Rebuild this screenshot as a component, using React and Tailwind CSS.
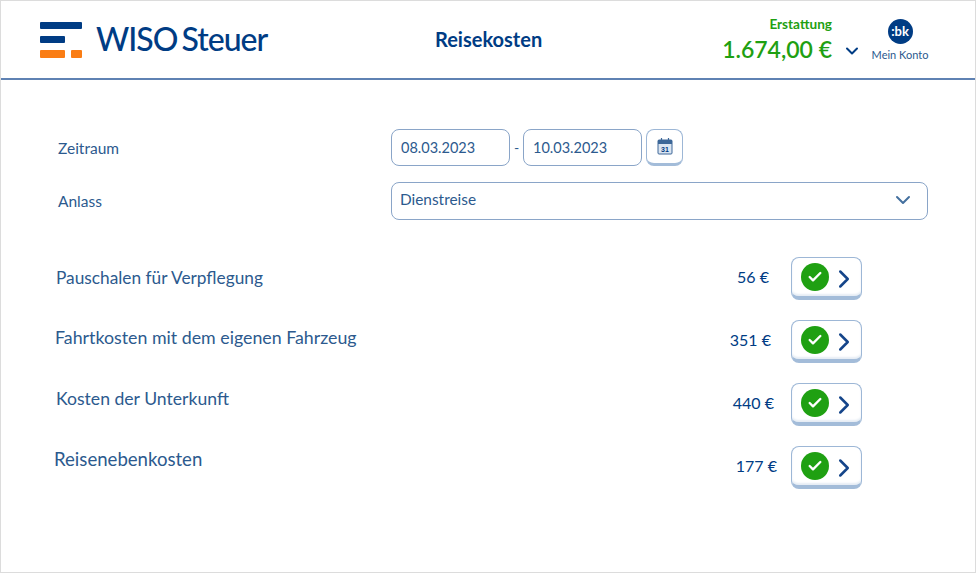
import React from "react";
import { ChevronDown, ChevronRight, Check } from "lucide-react";

const font = "font-['Lato','Liberation_Sans',sans-serif]";

const rows = [
  { label: "Pauschalen für Verpflegung", amount: "56 €", labelClass: "ml-[55px] -mt-[2px] text-[17.3px]", amountClass: "mr-[22px]" },
  { label: "Fahrtkosten mit dem eigenen Fahrzeug", amount: "351 €", labelClass: "ml-[54px] -mt-[8px] text-[17.8px]", amountClass: "mr-[20px]" },
  { label: "Kosten der Unterkunft", amount: "440 €", labelClass: "ml-[55px] -mt-[10px] text-[17.6px]", amountClass: "mr-[17px]" },
  { label: "Reisenebenkosten", amount: "177 €", labelClass: "ml-[53px] -mt-[16px] text-[18.6px]", amountClass: "mr-[14px]" },
];

function Logo() {
  return (
    <div className="flex flex-col gap-[7px] w-[42px]">
      <div className="h-[7px] w-[42px] rounded-[1px] bg-[#003c84]" />
      <div className="h-[7px] w-[25px] rounded-[1px] bg-[#003c84]" />
      <div className="flex justify-between">
        <div className="h-[8px] w-[25px] rounded-[1px] bg-[#fa7d14]" />
        <div className="h-[8px] w-[11px] rounded-[1px] bg-[#fa7d14]" />
      </div>
    </div>
  );
}

function CalendarIcon() {
  return (
    <svg width="16" height="18" viewBox="0 0 16 18" fill="none">
      <rect x="1" y="3" width="14" height="14" rx="1" fill="#dbe5f1" stroke="#3c6798" />
      <rect x="1" y="3" width="14" height="4" fill="#3c6798" />
      <path d="M4.5 1v4M11.5 1v4" stroke="#3c6798" strokeWidth="1.2" />
      <text x="8" y="15" textAnchor="middle" fontSize="7" fontWeight="700" fill="#003c84" fontFamily="Liberation Sans">31</text>
    </svg>
  );
}

function StatusButton() {
  return (
    <button className="w-[71px] h-[43px] rounded-[8px] border border-[#9db7d6] border-b-[4px] border-b-[#a3bcd9] bg-white flex items-center pl-[9px] shadow-[inset_0_-2px_2px_#e6edf5]">
      <span className="w-[28px] h-[28px] rounded-full bg-[#1fa012] flex items-center justify-center">
        <Check size={16} strokeWidth={3.5} className="text-white" />
      </span>
      <ChevronRight size={30} strokeWidth={2} className="text-[#15458a] mt-[4px]" />
    </button>
  );
}

export default function App() {
  return (
    <div className={`${font} w-[976px] h-[573px] bg-white border border-[#dcdcdc] overflow-hidden text-[#2c5a8e]`}>
      <header className="h-[79px] border-b-2 border-[#5f82b3] flex items-start">
        <div className="ml-[39px] mt-[21px]"><Logo /></div>
        <div className="ml-[14px] mt-[18px] w-[339px] text-[32px] leading-[40px] font-medium text-[#003c84] tracking-[-1px] [word-spacing:-3px] whitespace-nowrap">WISO Steuer</div>
        <div className="mt-[26px] w-[300px] text-[20px] leading-[24px] font-bold text-[#003c84]">Reisekosten</div>
        <div className="mt-[15px] w-[110px] flex flex-col items-end -ml-[13px]">
          <div className="text-[13.6px] leading-[17px] font-bold text-[#1fa012]">Erstattung</div>
          <div className="text-[23px] leading-[30px] font-semibold text-[#1fa012] whitespace-nowrap mt-px">1.674,00 €</div>
        </div>
        <ChevronDown size={20} strokeWidth={2.4} className="mt-[40px] ml-[10px] text-[#003c84]" />
        <div className="mt-[18px] ml-[3px] w-[70px] flex flex-col items-center">
          <div className="w-[25px] h-[25px] rounded-full bg-[#003c84] text-white text-[13px] leading-[24px] font-bold text-center">:bk</div>
          <div className="text-[11px] leading-[15px] mt-[3px] text-[#2c5a8e] whitespace-nowrap">Mein Konto</div>
        </div>
      </header>

      <main className="pt-[48px]">
        <div className="flex items-center h-[38px] mb-[16px]">
          <div className="ml-[57px] w-[333px] pt-[4px] text-[15.5px]">Zeitraum</div>
          <div className="w-[119px] h-[37px] rounded-[8px] border border-[#8aa5c8] pl-[9px] pt-px text-[14.5px] flex items-center">08.03.2023</div>
          <div className="w-[13px] text-center text-[14px]">-</div>
          <div className="w-[119px] h-[37px] rounded-[8px] border border-[#8aa5c8] pl-[9px] pt-px text-[14.5px] flex items-center">10.03.2023</div>
          <button className="ml-[4px] w-[37px] h-[37px] rounded-[8px] border border-[#9db7d6] border-b-[3px] border-b-[#a3bcd9] flex items-center justify-center"><CalendarIcon /></button>
        </div>
        <div className="flex items-center h-[38px] mb-[37px]">
          <div className="ml-[57px] w-[333px] pt-[2px] text-[15.5px]">Anlass</div>
          <div className="w-[537px] h-[38px] rounded-[8px] border border-[#8aa5c8] pl-[8px] pr-[12px] pb-[2px] text-[15.4px] flex items-center justify-between">
            <span>Dienstreise</span>
            <ChevronDown size={24} strokeWidth={2} className="text-[#44709f]" />
          </div>
        </div>
        <div className="flex flex-col gap-[20px] pr-[113px]">
          {rows.map((row) => (
            <div key={row.label} className="flex items-center h-[43px]">
              <div className={`flex-1 whitespace-nowrap ${row.labelClass}`}>{row.label}</div>
              <div className={`text-[16px] -mt-[4px] text-[#003c84] whitespace-nowrap ${row.amountClass}`}>{row.amount}</div>
              <StatusButton />
            </div>
          ))}
        </div>
      </main>
    </div>
  );
}
